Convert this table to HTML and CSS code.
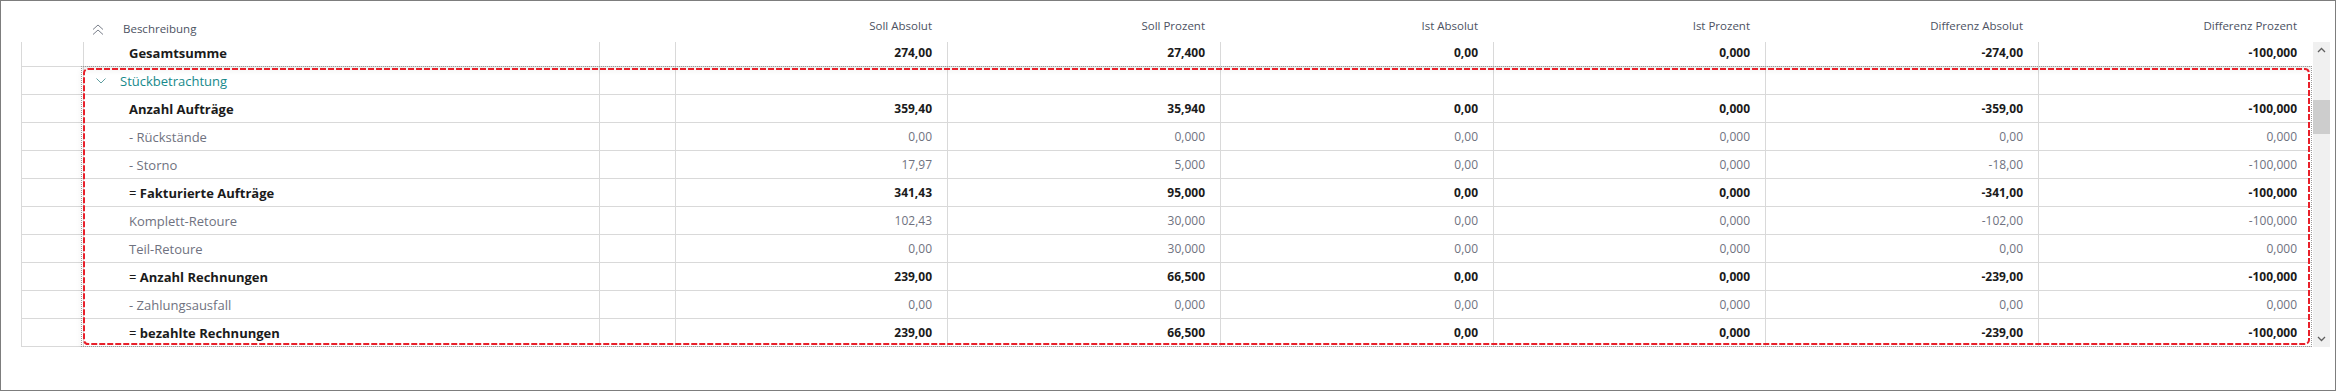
FILE: index.html
```html
<!DOCTYPE html>
<html lang="de">
<head>
<meta charset="utf-8">
<title>Stückbetrachtung</title>
<link rel="stylesheet" href="styles.css">
</head>
<body>
<div class="window">
  <div class="header">
    <div class="hcell"></div>
    <div class="hcell hdesc">
      <svg class="collapse-all" width="12" height="11" viewBox="0 0 12 11"><path d="M1 5.5 L6 1 L11 5.5 M1 10.5 L6 6 L11 10.5" fill="none" stroke="#7a7f8a" stroke-width="1"/></svg>
      <span>Beschreibung</span>
    </div>
    <div class="hcell"></div>
    <div class="hcell hnum">Soll Absolut</div>
    <div class="hcell hnum">Soll Prozent</div>
    <div class="hcell hnum">Ist Absolut</div>
    <div class="hcell hnum">Ist Prozent</div>
    <div class="hcell hnum">Differenz Absolut</div>
    <div class="hcell hnum">Differenz Prozent</div>
  </div>
  <div class="body-row">
    <div class="grid-body">
      <div class="rows">
        <div class="row bold">
          <div class="cell"></div><div class="cell desc">Gesamtsumme</div><div class="cell"></div>
          <div class="cell num">274,00</div><div class="cell num">27,400</div><div class="cell num">0,00</div><div class="cell num">0,000</div><div class="cell num">-274,00</div><div class="cell num">-100,000</div>
        </div>
        <div class="row group">
          <div class="cell"></div>
          <div class="cell gdesc"><svg class="chev" width="10" height="6" viewBox="0 0 10 6"><path d="M0.5 0.5 L5 5 L9.5 0.5" fill="none" stroke="#5e9ea0" stroke-width="1"/></svg><span>Stückbetrachtung</span></div>
          <div class="cell"></div><div class="cell"></div><div class="cell"></div><div class="cell"></div><div class="cell"></div><div class="cell"></div><div class="cell"></div>
        </div>
        <div class="row bold">
          <div class="cell"></div><div class="cell desc">Anzahl Aufträge</div><div class="cell"></div>
          <div class="cell num">359,40</div><div class="cell num">35,940</div><div class="cell num">0,00</div><div class="cell num">0,000</div><div class="cell num">-359,00</div><div class="cell num">-100,000</div>
        </div>
        <div class="row light">
          <div class="cell"></div><div class="cell desc">- Rückstände</div><div class="cell"></div>
          <div class="cell num">0,00</div><div class="cell num">0,000</div><div class="cell num">0,00</div><div class="cell num">0,000</div><div class="cell num">0,00</div><div class="cell num">0,000</div>
        </div>
        <div class="row light">
          <div class="cell"></div><div class="cell desc">- Storno</div><div class="cell"></div>
          <div class="cell num">17,97</div><div class="cell num">5,000</div><div class="cell num">0,00</div><div class="cell num">0,000</div><div class="cell num">-18,00</div><div class="cell num">-100,000</div>
        </div>
        <div class="row bold">
          <div class="cell"></div><div class="cell desc"><span class="eq">= </span>Fakturierte Aufträge</div><div class="cell"></div>
          <div class="cell num">341,43</div><div class="cell num">95,000</div><div class="cell num">0,00</div><div class="cell num">0,000</div><div class="cell num">-341,00</div><div class="cell num">-100,000</div>
        </div>
        <div class="row light">
          <div class="cell"></div><div class="cell desc">Komplett-Retoure</div><div class="cell"></div>
          <div class="cell num">102,43</div><div class="cell num">30,000</div><div class="cell num">0,00</div><div class="cell num">0,000</div><div class="cell num">-102,00</div><div class="cell num">-100,000</div>
        </div>
        <div class="row light">
          <div class="cell"></div><div class="cell desc">Teil-Retoure</div><div class="cell"></div>
          <div class="cell num">0,00</div><div class="cell num">30,000</div><div class="cell num">0,00</div><div class="cell num">0,000</div><div class="cell num">0,00</div><div class="cell num">0,000</div>
        </div>
        <div class="row bold">
          <div class="cell"></div><div class="cell desc"><span class="eq">= </span>Anzahl Rechnungen</div><div class="cell"></div>
          <div class="cell num">239,00</div><div class="cell num">66,500</div><div class="cell num">0,00</div><div class="cell num">0,000</div><div class="cell num">-239,00</div><div class="cell num">-100,000</div>
        </div>
        <div class="row light">
          <div class="cell"></div><div class="cell desc">- Zahlungsausfall</div><div class="cell"></div>
          <div class="cell num">0,00</div><div class="cell num">0,000</div><div class="cell num">0,00</div><div class="cell num">0,000</div><div class="cell num">0,00</div><div class="cell num">0,000</div>
        </div>
        <div class="row bold">
          <div class="cell"></div><div class="cell desc"><span class="eq">= </span>bezahlte Rechnungen</div><div class="cell"></div>
          <div class="cell num">239,00</div><div class="cell num">66,500</div><div class="cell num">0,00</div><div class="cell num">0,000</div><div class="cell num">-239,00</div><div class="cell num">-100,000</div>
        </div>
      </div>
      <div class="focus">
        <svg class="focus-dash" width="100%" height="100%"><rect x="2" y="2" rx="4" ry="4" width="2225" height="275" fill="none" stroke="#e8202a" stroke-width="2" stroke-dasharray="6 2"/></svg>
      </div>
    </div>
    <div class="scrollbar">
      <svg class="sarrow" width="9" height="6" viewBox="0 0 9 6"><path d="M1 5 L4.5 1.5 L8 5" fill="none" stroke="#606060" stroke-width="1.3"/></svg>
      <div class="thumb"></div>
      <div class="track"></div>
      <svg class="sarrow" width="9" height="6" viewBox="0 0 9 6"><path d="M1 1 L4.5 4.5 L8 1" fill="none" stroke="#606060" stroke-width="1.3"/></svg>
    </div>
  </div>
</div>
</body>
</html>
```

FILE: styles.css
```css
html, body {
  margin: 0;
  padding: 0;
  background: #ffffff;
}

.window {
  width: 2336px;
  height: 391px;
  box-sizing: border-box;
  border: 1px solid #7d7d7d;
  background: #ffffff;
  font-family: "Open Sans", "Noto Sans", "Liberation Sans", sans-serif;
  overflow: hidden;
}

.header,
.row {
  display: grid;
  grid-template-columns: 62px 516px 76px 272px 273px 273px 272px 273px 274px;
}

.header {
  margin-left: 20px;
  height: 41px;
  box-sizing: border-box;
  padding-top: 15px;
  font-size: 11.5px;
  line-height: 20px;
  color: #4c5262;
}

.hdesc {
  display: flex;
  align-items: center;
  padding-left: 9px;
}

.collapse-all {
  margin-right: 19px;
}

.hnum {
  text-align: right;
  padding-right: 15px;
}

.body-row {
  display: flex;
  margin-left: 20px;
  height: 305px;
}

.grid-body {
  position: relative;
  width: 2291px;
  height: 305px;
  overflow: hidden;
}

.rows {
  margin-top: -3px;
}

.row {
  height: 28px;
}

.cell {
  box-sizing: border-box;
  border-left: 1px solid #d9d9d9;
  border-bottom: 1px solid #d9d9d9;
  padding-top: 1px;
  line-height: 26px;
  white-space: nowrap;
}

.desc {
  padding-left: 45px;
  font-size: 13px;
}

.num {
  text-align: right;
  padding-right: 15px;
  font-size: 12px;
}

.bold .cell {
  font-weight: 700;
  color: #1b1b1b;
}

.bold .eq {
  font-weight: 400;
}

.light .cell {
  font-weight: 400;
  color: #6f7280;
}

.gdesc {
  display: flex;
  align-items: center;
  padding-left: 12px;
  font-size: 13px;
  color: #16898b;
}

.chev {
  margin-right: 14px;
}

.focus {
  position: absolute;
  left: 60px;
  top: 24px;
  width: 2231px;
  height: 281px;
  box-sizing: border-box;
  border: 1px dotted #9a9a9a;
  box-shadow: 0 4px 6px rgba(0, 0, 0, 0.06), inset 0 6px 6px -3px rgba(0, 0, 0, 0.07);
}

.focus-dash {
  display: block;
}

.scrollbar {
  margin-left: 1px;
  width: 17px;
  height: 305px;
  background: #f0f0f0;
  display: flex;
  flex-direction: column;
  align-items: center;
}

.sarrow {
  flex: none;
  margin: 5px 0;
}

.thumb {
  flex: none;
  align-self: stretch;
  margin-top: 42px;
  height: 34px;
  background: #cdcdcd;
}

.track {
  flex: 1;
}
```
